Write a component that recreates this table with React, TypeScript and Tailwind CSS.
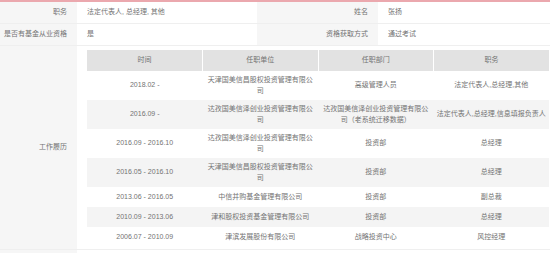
const rows = [
  { time: "2018.02 -", org: ["天津国美信昌股权投资管理有限公", "司"], dept: ["高级管理人员"], title: "法定代表人,总经理,其他" },
  { time: "2016.09 -", org: ["达孜国美信泽创业投资管理有限公", "司"], dept: ["达孜国美信泽创业投资管理有限公", "司（老系统迁移数据）"], title: "法定代表人,总经理,信息填报负责人" },
  { time: "2016.09 - 2016.10", org: ["达孜国美信泽创业投资管理有限公", "司"], dept: ["投资部"], title: "总经理" },
  { time: "2016.05 - 2016.10", org: ["天津国美信昌股权投资管理有限公", "司"], dept: ["投资部"], title: "总经理" },
  { time: "2013.06 - 2016.05", org: ["中信并购基金管理有限公司"], dept: ["投资部"], title: "副总裁" },
  { time: "2010.09 - 2013.06", org: ["津和股权投资基金管理有限公司"], dept: ["投资部"], title: "总经理" },
  { time: "2006.07 - 2010.09", org: ["津滨发展股份有限公司"], dept: ["战略投资中心"], title: "风控经理" },
];

function Lines({ lines }: { lines: string[] }) {
  return (
    <>
      {lines.map((l, i) => (
        <span key={i} className="block">
          {l}
        </span>
      ))}
    </>
  );
}

export default function App() {
  return (
    <div className="w-[550px] h-[253px] overflow-hidden bg-white border-t-2 border-[#eba8ae] text-[7px] text-[#737373] font-['Liberation_Sans','Noto_Sans_CJK_SC',sans-serif]">
      {/* 职务 / 姓名 */}
      <div className="flex h-[22px] border-b border-[#efefef]">
        <div className="w-[77px] bg-[#f6f6f6] flex items-center justify-end pr-[10px]">职务</div>
        <div className="w-[180px] flex items-center pl-[10px]">法定代表人, 总经理, 其他</div>
        <div className="w-[121px] bg-[#f6f6f6] flex items-center justify-end pr-[10px]">姓名</div>
        <div className="flex-1 flex items-center pl-[10px]">张扬</div>
      </div>

      {/* 资格 */}
      <div className="flex h-[22px] border-b border-[#efefef]">
        <div className="w-[77px] bg-[#f6f6f6] flex items-center justify-end pr-[10px] whitespace-nowrap">是否有基金从业资格</div>
        <div className="w-[180px] flex items-center pl-[10px]">是</div>
        <div className="w-[121px] bg-[#f6f6f6] flex items-center justify-end pr-[10px]">资格获取方式</div>
        <div className="flex-1 flex items-center pl-[10px]">通过考试</div>
      </div>

      {/* 工作履历 */}
      <div className="flex h-[204px] border-b border-[#efefef]">
        <div className="w-[77px] bg-[#f6f6f6] flex items-center justify-end pr-[10px]">工作履历</div>
        <div className="flex-1 pl-[10px] pt-[4px]">
          <table className="w-[462px] table-fixed border-collapse text-center whitespace-nowrap">
            <thead>
              <tr className="h-[21px] bg-[#e2e2e2]">
                <th className="font-normal border-r border-white">时间</th>
                <th className="font-normal border-r border-white">任职单位</th>
                <th className="font-normal border-r border-white">任职部门</th>
                <th className="font-normal">职务</th>
              </tr>
            </thead>
            <tbody>
              {rows.map((r, i) => (
                <tr key={i} className={`h-[20px] leading-[10.5px] ${i % 2 === 1 ? "bg-[#f4f4f4]" : "bg-white"}`}>
                  <td className="py-[4px]">{r.time}</td>
                  <td className="py-[4px]">
                    <Lines lines={r.org} />
                  </td>
                  <td className="py-[4px]">
                    <Lines lines={r.dept} />
                  </td>
                  <td className="py-[4px]">{r.title}</td>
                </tr>
              ))}
            </tbody>
          </table>
        </div>
      </div>

      <div className="flex h-[20px]">
        <div className="w-[77px] bg-[#f6f6f6]" />
        <div className="flex-1" />
      </div>
    </div>
  );
}
